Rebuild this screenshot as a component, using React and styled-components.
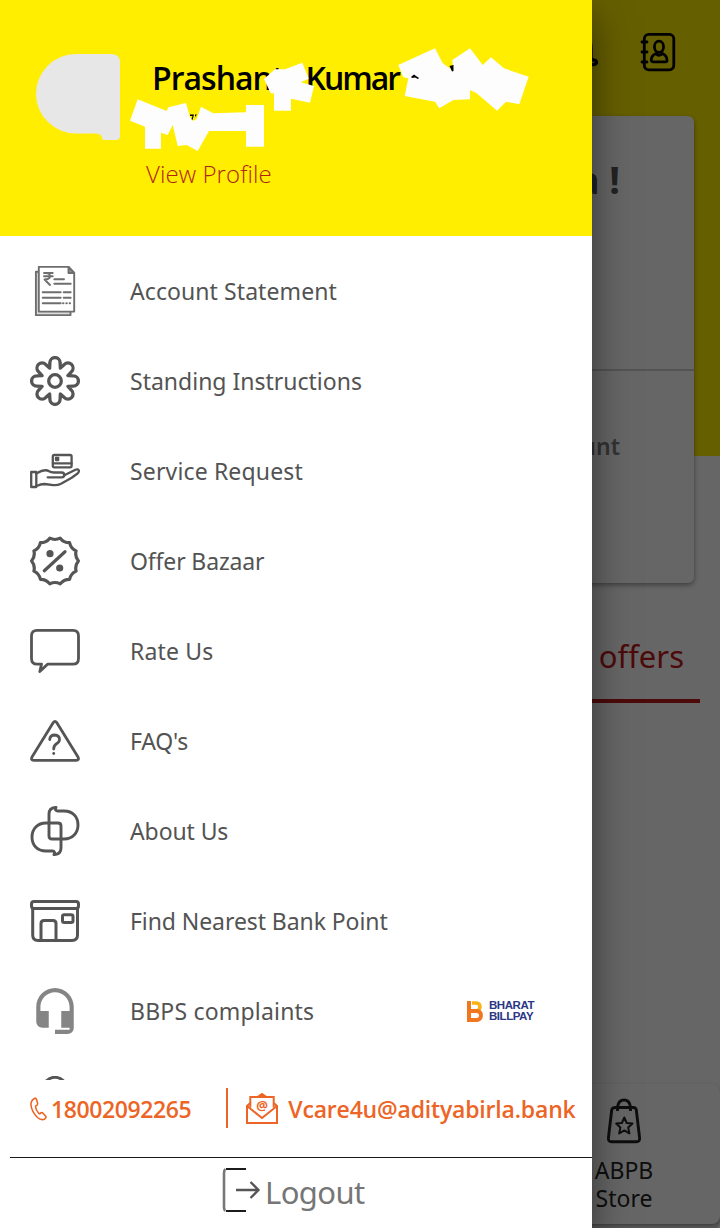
import styled, { createGlobalStyle } from "styled-components";

const colors = {
  primary: "#ffee00",
  danger: "#c0191a",
  accent: "#ec6526",
  text: "#535353",
  icon: "#555555",
};

const menuItems = [
  { label: "Account Statement", icon: StatementIcon, track: "0.08px" },
  { label: "Standing Instructions", icon: GearIcon, track: "0px" },
  { label: "Service Request", icon: ServiceIcon, track: "0.15px" },
  { label: "Offer Bazaar", icon: OfferIcon, track: "-0.15px" },
  { label: "Rate Us", icon: RateIcon, track: "0.15px" },
  { label: "FAQ's", icon: FaqIcon, track: "-0.2px" },
  { label: "About Us", icon: AboutIcon, track: "-0.1px" },
  { label: "Find Nearest Bank Point", icon: BankIcon, track: "-0.08px" },
  { label: "BBPS complaints", icon: HeadsetIcon, track: "0.2px", billpay: true },
  { label: "", icon: PersonIcon, track: "0px" },
];

const App = () => {
  return (
    <Screen>
      <GlobalStyle />
      <Home />
      <Scrim />
      <Drawer>
        <Profile />
        <Menu>
          {menuItems.map(({ label, icon: Icon, track, billpay }) => (
            <MenuRow key={label}>
              <Icon />
              <MenuLabel $track={track}>{label}</MenuLabel>
              {billpay && <BillPay />}
            </MenuRow>
          ))}
        </Menu>
        <Contact>
          <PhoneIcon />
          <ContactText $gap="4px" $track="-0.4px">18002092265</ContactText>
          <Divider />
          <MailIcon />
          <ContactText $gap="10px" $track="-0.18px">Vcare4u@adityabirla.bank</ContactText>
        </Contact>
        <Logout>
          <LogoutIcon />
          <LogoutText>Logout</LogoutText>
        </Logout>
      </Drawer>
    </Screen>
  );
};
export default App;

const Home = () => (
  <HomePage>
    <TopBar>
      <BellIcon />
      <ContactsIcon />
    </TopBar>
    <Card>
      <Greeting>a !</Greeting>
      <CardBody>Account</CardBody>
    </Card>
    <Tabs>
      <Tab>offers</Tab>
    </Tabs>
    <BottomNav>
      <NavItem>
        <BagIcon />
        <NavLabel>ABPB Store</NavLabel>
      </NavItem>
    </BottomNav>
  </HomePage>
);

const Profile = () => (
  <ProfileHeader>
    <Avatar viewBox="0 0 84 86">
      <path
        d="M40 0H76Q84 1 84 7V82Q84 86 80 86H69Q66 86 66 84Q66 80 60 79.500H40A40 39.750 0 0 1 40 0Z"
        fill="#e7e7e7"
      />
    </Avatar>
    <ProfileText>
      <Name>
        <NamePart $track="-1px">Prashant</NamePart>
        <NamePart $track="-2px">Kumar</NamePart>
      </Name>
      <ViewProfile>View Profile</ViewProfile>
    </ProfileText>
    <Mask viewBox="0 0 592 236">
      <path
        fill="#fdfdfd"
        d="M264 79L275 69.300H285L302.300 62.700L308.700 78.700L300.700 82.300L314 86L310 102.700L291 98.700V110.700H274V93.300H270.700Z"
      />
      <path
        fill="#fdfdfd"
        d="M398.300 65L435 48.300L442.700 63.300L453.300 70.700L452.300 60L470 48.300L482.700 65L491 57.300L504 68.300L528.700 76.700L519.300 104.300L506 101.700L497 110.700L476.700 93.300L470 90V99.300L453.300 100L439.300 108.300L435 101.700L404.700 96L408.300 78.300L403.300 77.300Z"
      />
      <path
        fill="#fdfdfd"
        d="M137.700 99.300L166.700 111L168.300 107.300L186 103L190 117.300L193 121L196.700 119L201 106.700L213.300 113.300L246 112.300V105H264V146.700H246V131H209L197.700 151L186.700 145L177.700 146L172.700 125L167.700 135L161 132.700V148.700H145V126.700L130 120.700Z"
      />
      <path d="M411 77L414 74.500L416 76L419 78L418 79L415 77.500L412 78Z" />
      <path d="M449.500 66L453.500 65V71L452 71.500Z" />
      <path d="M190 114.500H194L192.500 120L191.500 119L192.500 116H190ZM195 114.500H197L195 117Z" />
    </Mask>
  </ProfileHeader>
);

const BillPay = () => (
  <BillPayWrapper>
    <svg width="16" height="21" viewBox="0 0 16 21">
      <path d="M2 0V21" stroke="#f0761f" strokeWidth="4" fill="none" />
      <path d="M5 2H9Q13 2 13 6Q13 8 11 9.500" stroke="#fbb017" strokeWidth="3.600" fill="none" />
      <path d="M3 10H10Q14 10.500 14 14.500T10 19H3" stroke="#f0761f" strokeWidth="3.800" fill="none" />
    </svg>
    <BillPayText>
      <span>BHARAT</span>
      <span>BILLPAY</span>
    </BillPayText>
  </BillPayWrapper>
);

/* ---------- icons ---------- */

const polar = (r, deg) => {
  const a = (deg * Math.PI) / 180;
  return `${(25 + r * Math.cos(a)).toFixed(2)} ${(25 + r * Math.sin(a)).toFixed(2)}`;
};

// eight rounded lobes, each drawn from notch to notch
const gearPath = () => {
  let d = `M${polar(14, -22.5)}`;
  for (let i = 0; i < 8; i++) {
    const a = i * 45;
    d += `L${polar(19, a - 15.6)}A5.1 5.1 0 0 1 ${polar(19, a + 15.6)}L${polar(14, a + 22.5)}`;
  }
  return d + "Z";
};

const sealPath = () => {
  const step = 360 / 14;
  let d = `M${polar(23.4, 0)}`;
  for (let i = 0; i < 14; i++) {
    d += `Q${polar(20.2, (i + 0.5) * step)} ${polar(23.4, (i + 1) * step)}`;
  }
  return d + "Z";
};

function StatementIcon() {
  return (
    <MenuIcon $stroke="1.900" $color="#6e6e6e" viewBox="0 0 50 50">
      <path d="M8.500 5.800H5.900V49.200H40.500V46" fill="#dcdcdc" />
      <path d="M8.800 0.900H38.500L44.200 7V45.600H8.800Z" fill="#fff" />
      <path d="M38.500 1V7H44.200Z" fill="#999" />
      <path d="M24.300 13.300H34M24.300 17.700H40.700" />
      <path d="M12.700 26.300H30.700M33.700 26.300H40.700M12.700 31.700H30.700M33.700 31.700H40.700M12.700 37.200H30.700" />
      <path d="M33 37.200H40.700" strokeDasharray="0.500 2.800" />
      <path d="M14 7H22.700M14 10.300H22.700M16 7Q20.500 7.500 20 10.500Q19.500 13.500 14.500 13.500L20 19" />
    </MenuIcon>
  );
}

function GearIcon() {
  return (
    <MenuIcon $stroke="3.300" viewBox="0 0 50 50">
      <path d={gearPath()} />
      <circle cx="25" cy="25" r="6.300" />
    </MenuIcon>
  );
}

function ServiceIcon() {
  return (
    <MenuIcon $stroke="2.300" viewBox="0 0 50 50">
      <rect x="22.800" y="9" width="18.800" height="12.300" rx="1.500" />
      <rect x="26" y="11.800" width="2.200" height="2.200" />
      <path d="M23 17.300H41.500" />
      <path d="M1.200 26H6.300V41H1.200Z" />
      <path d="M6.300 27.500Q15 22.500 19 25.200Q21 26.500 24 26.500H31.700Q34.300 26.700 34.300 29T31.700 31.300H17.700" />
      <path d="M34.300 29.200L45.500 23.700Q48 22.600 48.800 24.500Q49.300 26 47.500 27.500L41.700 31.700L31 37.800Q28 39.400 23.300 39.200L14.500 38Q11 38 6.300 40" />
    </MenuIcon>
  );
}

function OfferIcon() {
  return (
    <MenuIcon $stroke="3.200" viewBox="0 0 50 50">
      <path d={sealPath()} />
      <path d="M14.300 34.700L35 15.700" />
      <circle cx="20" cy="17.700" r="2" fill={colors.icon} />
      <circle cx="29.700" cy="32" r="2" fill={colors.icon} />
    </MenuIcon>
  );
}

function RateIcon() {
  return (
    <MenuIcon $stroke="2.800" viewBox="0 0 50 50">
      <path d="M7 4.400H43Q48.500 4.400 48.500 10V32.500Q48.500 38.200 43 38.200H17.500L9.800 45.500L11.500 38.200H7Q1.500 38.200 1.500 32.500V10Q1.500 4.400 7 4.400Z" />
    </MenuIcon>
  );
}

function FaqIcon() {
  return (
    <MenuIcon $stroke="2.800" viewBox="0 0 50 50">
      <path d="M23.300 6.500Q25 4.200 26.700 6.500L48 41Q49.500 44.300 46.300 44.300H3.700Q0.500 44.300 2 41Z" />
      <path d="M19.700 23.500Q20.200 19 24.700 19Q29.500 19.300 29.500 23.500Q29.500 26 26.500 27.800Q23.700 29.500 23.700 33" />
      <path d="M23.700 37.500V37.600" />
    </MenuIcon>
  );
}

function AboutIcon() {
  const loop =
    "M19 8Q19 1.700 26 1.400Q24.500 4.800 27.500 5H34C43 5 48 11 48 19S42.500 33 34 33H22Q19 33 19 30Z";
  return (
    <MenuIcon $stroke="2.900" viewBox="0 0 50 50">
      <path d={loop} />
      <path d={loop} transform="rotate(180 25 25)" />
    </MenuIcon>
  );
}

function BankIcon() {
  return (
    <MenuIcon $stroke="3" viewBox="0 0 50 50">
      <rect x="1.500" y="5.500" width="47" height="7" rx="2.500" />
      <path d="M2.700 12.500V39Q2.700 44.500 8 44.500H42Q47.500 44.500 47.500 39V12.500" />
      <path d="M11 44.500V27.500Q11 24.500 14 24.500H23Q26 24.500 26 27.500V44.500" />
      <rect x="32.500" y="18.800" width="10.500" height="7.700" rx="1.800" />
    </MenuIcon>
  );
}

function HeadsetIcon() {
  return (
    <MenuIcon $stroke="0" viewBox="0 0 24 24">
      <path
        fill="#858585"
        d="M12 1c-4.970 0-9 4.030-9 9v7c0 1.660 1.340 3 3 3h3v-8H5v-2c0-3.870 3.130-7 7-7s7 3.130 7 7v2h-4v8h4v1h-7v2h6c1.660 0 3-1.340 3-3V10c0-4.970-4.030-9-9-9z"
      />
    </MenuIcon>
  );
}

function PersonIcon() {
  return (
    <MenuIcon $stroke="3" viewBox="0 0 50 50">
      <circle cx="25" cy="12.800" r="11.500" />
    </MenuIcon>
  );
}

const PhoneIcon = () => (
  <svg width="17" height="24" viewBox="0 0 17 24" fill="none" stroke={colors.accent} strokeWidth="1.600" strokeLinejoin="round">
    <path d="M4.800 1.200Q1 3 0.900 7.500Q1.500 14.500 7.500 20.500Q11 23.500 14.500 22.200Q16.500 20.800 15.800 19.300L12.500 15.800Q11.300 15.200 10.200 16.500Q9.500 17 8.700 16.300Q5.800 13 5.500 9.500Q5.500 8.700 6.500 8.500Q7.800 8 7.600 6.300L6.500 2.500Q6 1 4.800 1.200Z" />
  </svg>
);

const MailIcon = () => (
  <svg width="32" height="32" viewBox="0 0 32 32" fill="none" stroke={colors.accent} strokeWidth="2">
    <path d="M4.300 10L1 13V30H31V13L27.700 10" />
    <path d="M4.300 14.500V4H27.700V14.500" />
    <path d="M11.500 4L16 1L20.500 4" fill={colors.accent} />
    <path d="M1 13L16 25L31 13" />
    <MailGlyph x="16" y="17">@</MailGlyph>
  </svg>
);

const LogoutIcon = () => (
  <svg width="40" height="46" viewBox="0 0 40 46" fill="none" strokeWidth="2">
    <path d="M4.500 2.200Q3 3 3 6V40Q3 43 4.500 43.500" stroke="#777" strokeWidth="2.600" />
    <path d="M5 2H25M5 44H25" stroke="#1c1c1c" />
    <path d="M15 23H37M29.500 15L37.500 23L29.500 31" stroke="#555" strokeWidth="2.300" />
  </svg>
);

const BellIcon = () => (
  <svg width="40" height="44" viewBox="0 0 40 44" fill="none" stroke="#000" strokeWidth="3.300" strokeLinecap="round">
    <path d="M20 3Q32 4 32 19V28Q32.500 30 35 30Q37.500 30.500 37.500 32.300T35 34.500H5Q2.500 34 2.500 32.300T5 30Q7.500 30 8 28V19Q8 4 20 3Z" />
  </svg>
);

const ContactsIcon = () => (
  <svg width="36" height="40" viewBox="0 0 36 40" fill="none" stroke="#000" strokeWidth="2.800" strokeLinecap="round">
    <rect x="4.300" y="2.300" width="29.500" height="35.500" rx="4.500" />
    <path d="M2 10H7M2 20H7M2 30H7" />
    <ellipse cx="19" cy="14.800" rx="4.600" ry="5.600" />
    <path d="M16 21.500Q11 23.500 11.300 28.500Q11.500 29.800 13 29.800H25.500Q27 29.800 27 28.500Q27 23.500 22.500 21.500Q19 25 16 21.500Z" />
  </svg>
);

const BagIcon = () => (
  <svg width="36" height="46" viewBox="0 0 36 46" fill="none" stroke="#252525" strokeWidth="2.900" strokeLinejoin="round">
    <path d="M9.500 9.500H27.500Q29.800 9.500 30.300 12L33.600 40Q33.800 43.800 30.500 43.800H5.500Q2.200 43.800 2.400 40L5.700 12Q6.200 9.500 9.500 9.500Z" />
    <path d="M11.500 13V9Q12.500 2 18 2T24.500 9V13" />
    <path
      strokeWidth="2"
      d="M18.300 19.500L20.700 25L26.500 25.600L22.200 29.600L23.400 35.400L18.300 32.400L13.200 35.400L14.400 29.600L10.100 25.600L15.900 25Z"
    />
  </svg>
);

/* ---------- styles ---------- */

const GlobalStyle = createGlobalStyle`
  * {
    box-sizing: border-box;
  }

  body {
    margin: 0;
    font-family: "Noto Sans", "Open Sans", sans-serif;
    background: #666;
  }
`;

const Screen = styled.main`
  position: relative;
  width: 720px;
  height: 1228px;
  overflow: hidden;
`;

const HomePage = styled.section`
  display: flex;
  flex-direction: column;
  height: 100%;
  background: linear-gradient(${colors.primary} 456px, #fefefe 456px);
`;

const TopBar = styled.header`
  display: flex;
  justify-content: flex-end;
  align-items: center;
  gap: 41px;
  height: 116px;
  padding: 0 44px 13px 0;
`;

const Card = styled.article`
  display: flex;
  flex-direction: column;
  height: 467px;
  margin: 0 26px;
  border-radius: 6px;
  background: #fff;
  box-shadow: 0 2px 5px rgba(0, 0, 0, 0.4);
`;

const Greeting = styled.h2`
  height: 255px;
  margin: 0;
  padding: 36px 74px 0 0;
  border-bottom: 2px solid #cfcfcf;
  color: #555;
  font-size: 38px;
  line-height: 54px;
  text-align: right;
`;

const CardBody = styled.p`
  margin: 0;
  padding: 59px 74px 0 0;
  color: #808080;
  font-size: 23px;
  font-weight: 600;
  line-height: 32px;
  text-align: right;
`;

const Tabs = styled.nav`
  display: flex;
  justify-content: flex-end;
  margin: 52px 20px 0;
  border-bottom: 4px solid ${colors.danger};
`;

const Tab = styled.span`
  height: 64px;
  padding-right: 16px;
  color: ${colors.danger};
  font-size: 31px;
  line-height: 42px;
`;

const BottomNav = styled.footer`
  display: flex;
  justify-content: flex-end;
  height: 140px;
  margin: auto 0 4px;
  border-radius: 8px;
  background: #fff;
  box-shadow: 0 1px 3px rgba(0, 0, 0, 0.3), 0 6px 0 #d5d5d5;
`;

const NavItem = styled.div`
  display: flex;
  flex-direction: column;
  align-items: center;
  gap: 12px;
  width: 192px;
  padding-top: 14px;
`;

const NavLabel = styled.span`
  width: 80px;
  color: #252525;
  font-size: 23px;
  line-height: 28px;
  text-align: center;
`;

const Scrim = styled.div`
  position: absolute;
  inset: 0;
  background: rgba(0, 0, 0, 0.6);
`;

const Drawer = styled.aside`
  position: absolute;
  top: 0;
  left: 0;
  display: flex;
  flex-direction: column;
  width: 592px;
  height: 100%;
  background: #fff;
  box-shadow: 0 16px 36px rgba(0, 0, 0, 0.5);
`;

const ProfileHeader = styled.header`
  position: relative;
  display: flex;
  gap: 26px;
  height: 236px;
  padding: 54px 36px 0;
  background: ${colors.primary};
`;

const Avatar = styled.svg`
  width: 84px;
  height: 86px;
`;

const ProfileText = styled.div`
  display: flex;
  flex-direction: column;
  justify-content: space-between;
  height: 137px;
`;

const Name = styled.h1`
  display: flex;
  gap: 22px;
  margin: 0;
  padding-left: 6px;
  font-family: "Open Sans", "Noto Sans", sans-serif;
  font-size: 32px;
  font-weight: 650;
  line-height: 48px;
`;

const NamePart = styled.span`
  letter-spacing: ${({ $track }) => $track};
`;

const ViewProfile = styled.a`
  color: #b02418;
  font-family: "Open Sans", "Noto Sans", sans-serif;
  font-size: 24px;
  font-weight: 350;
  letter-spacing: 0.08px;
  line-height: 35px;
`;

const Mask = styled.svg`
  position: absolute;
  inset: 0;
`;

const Menu = styled.ul`
  flex: 1;
  min-height: 0;
  margin: 0;
  padding: 10px 30px 0;
  overflow: hidden;
  list-style: none;
`;

const MenuRow = styled.li`
  display: flex;
  align-items: center;
  height: 90px;
`;

const MenuIcon = styled.svg`
  flex: none;
  width: 50px;
  height: 50px;
  margin-right: 50px;
  fill: none;
  stroke: ${({ $color }) => $color || colors.icon};
  stroke-width: ${({ $stroke }) => $stroke};
  stroke-linecap: round;
  stroke-linejoin: round;
`;

const MenuLabel = styled.span`
  color: ${colors.text};
  font-size: 23px;
  letter-spacing: ${({ $track }) => $track};
  white-space: nowrap;
`;

const BillPayWrapper = styled.div`
  display: flex;
  align-items: center;
  gap: 6px;
  margin: 0 28px 0 auto;
`;

const BillPayText = styled.div`
  display: flex;
  flex-direction: column;
  color: #2c3685;
  font-family: "Liberation Sans", sans-serif;
  font-size: 11.500px;
  font-weight: bold;
  letter-spacing: -0.45px;
  line-height: 11px;
`;

const Contact = styled.div`
  display: flex;
  align-items: center;
  height: 78px;
  margin-left: 10px;
  padding: 0 0 20px 20px;
  border-bottom: 1px solid #1a1a1a;
`;

const ContactText = styled.span`
  margin-left: ${({ $gap }) => $gap};
  color: ${colors.accent};
  font-family: "Open Sans", "Noto Sans", sans-serif;
  font-size: 23px;
  font-weight: 620;
  letter-spacing: ${({ $track }) => $track};
`;

const Divider = styled.i`
  width: 2px;
  height: 40px;
  margin: 0 18px 2px 35px;
  background: ${colors.accent};
`;

const MailGlyph = styled.text`
  fill: ${colors.accent};
  stroke: none;
  font-size: 13px;
  font-weight: bold;
  text-anchor: middle;
`;

const Logout = styled.button`
  display: flex;
  align-items: center;
  height: 70px;
  padding: 0 0 6px 221px;
  border: 0;
  background: none;
  font-family: inherit;
`;

const LogoutText = styled.span`
  margin-left: 4px;
  padding-top: 4px;
  color: #767676;
  font-size: 31px;
  letter-spacing: -0.6px;
`;
